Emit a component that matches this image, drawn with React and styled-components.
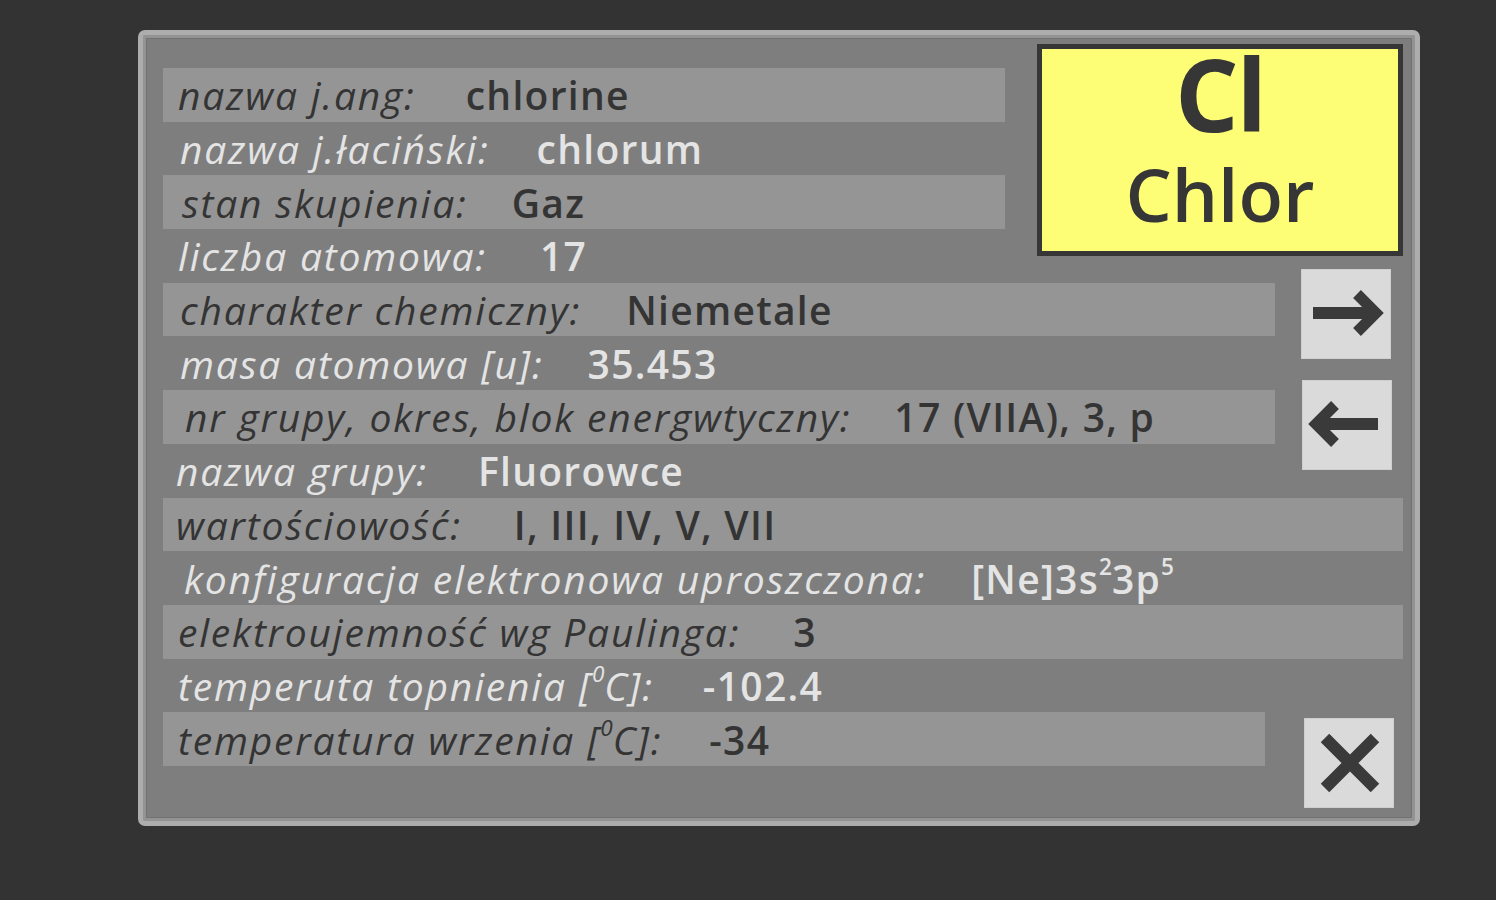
import React from "react";
import styled, { createGlobalStyle } from "styled-components";

const GlobalStyle = createGlobalStyle`
  html, body {
    margin: 0;
    padding: 0;
    background: #333333;
  }
  body {
    font-family: "Open Sans", "DejaVu Sans", sans-serif;
  }
`;

const rows = [
  { label: "nazwa j.ang:", value: "chlorine", striped: true, span: 1, gap: 50 },
  { label: "nazwa j.łaciński:", value: "chlorum", span: 1, indent: 2, gap: 47 },
  { label: "stan skupienia:", value: "Gaz", striped: true, span: 1, indent: 4, gap: 44 },
  { label: "liczba atomowa:", value: "17", span: 1, gap: 53 },
  { label: "charakter chemiczny:", value: "Niemetale", striped: true, span: 2, indent: 2 },
  { label: "masa atomowa [u]:", value: "35.453", span: 2, indent: 2, gap: 44 },
  {
    label: "nr grupy, okres, blok energwtyczny:",
    value: "17 (VIIA), 3, p",
    striped: true,
    span: 2,
    indent: 7,
    gap: 43,
  },
  { label: "nazwa grupy:", value: "Fluorowce", span: 2, indent: -2, gap: 50 },
  { label: "wartościowość:", value: "I, III, IV, V, VII", striped: true, span: 3, indent: -2, gap: 52 },
  {
    label: "konfiguracja elektronowa uproszczona:",
    value: (
      <>
        [Ne]3s<sup>2</sup>3p<sup>5</sup>
      </>
    ),
    span: 3,
    indent: 6,
  },
  { label: "elektroujemność wg Paulinga:", value: "3", striped: true, span: 3, gap: 53 },
  {
    label: (
      <>
        temperuta topnienia [<sup>0</sup>C]:
      </>
    ),
    value: "-102.4",
    span: 3,
    gap: 49,
  },
  {
    label: (
      <>
        temperatura wrzenia [<sup>0</sup>C]:
      </>
    ),
    value: "-34",
    striped: true,
    span: 2,
    trim: 10,
    gap: 47,
  },
];

const App = () => {
  return (
    <>
      <GlobalStyle />
      <Page>
        <Panel>
          {rows.map((row, i) => (
            <Row
              key={i}
              $striped={row.striped}
              $span={row.span}
              $indent={row.indent || 0}
              $gap={row.gap || 45}
              $trim={row.trim || 0}
            >
              <Label>{row.label}</Label>
              <Value>{row.value}</Value>
            </Row>
          ))}

          <ElementCard>
            <Symbol>Cl</Symbol>
            <ElementName>Chlor</ElementName>
          </ElementCard>

          <NavButton $row="5 / 7" $top={-14} $left={26} aria-label="next">
            <svg width="90" height="90" viewBox="0 0 90 90">
              <path d="M12 44 H68" stroke="#3a3a3a" strokeWidth="12" fill="none" />
              <path
                d="M56 25 L75 44 L56 63"
                stroke="#3a3a3a"
                strokeWidth="11"
                fill="none"
                strokeLinejoin="miter"
              />
            </svg>
          </NavButton>

          <NavButton $row="7 / 9" $top={-10} $left={27} aria-label="prev">
            <svg width="90" height="90" viewBox="0 0 90 90">
              <path d="M20 44 H76" stroke="#3a3a3a" strokeWidth="12" fill="none" />
              <path
                d="M33 25 L14 44 L33 63"
                stroke="#3a3a3a"
                strokeWidth="11"
                fill="none"
                strokeLinejoin="miter"
              />
            </svg>
          </NavButton>

          <NavButton $row="13 / 15" $top={6} $left={29} aria-label="close">
            <svg width="90" height="90" viewBox="0 0 90 90">
              <path
                d="M21 20 L71 70 M71 20 L21 70"
                stroke="#3a3a3a"
                strokeWidth="12"
                fill="none"
              />
            </svg>
          </NavButton>
        </Panel>
      </Page>
    </>
  );
};

const Page = styled.div`
  padding: 30px 0 0 138px;
`;

const Panel = styled.div`
  box-sizing: border-box;
  width: 1282px;
  height: 796px;
  padding: 33px 12px 0 20px;
  background: #7e7e7e;
  border: 5px solid #adadad;
  border-radius: 7px;
  box-shadow: inset 0 0 0 3px #939393, inset 0 0 0 4px #727272;
  display: grid;
  grid-template-columns: 842px 270px 128px;
  grid-template-rows: repeat(13, 53.7px) 1fr;
`;

const Row = styled.div`
  grid-column: 1 / ${(p) => p.$span + 1};
  margin-right: ${(p) => p.$trim}px;
  display: flex;
  align-items: center;
  gap: ${(p) => p.$gap}px;
  padding-left: ${(p) => 15 + p.$indent}px;
  background: ${(p) => (p.$striped ? "#959595" : "transparent")};
  color: ${(p) => (p.$striped ? "#343434" : "#e4e4e4")};
  font-size: 39px;
  white-space: nowrap;
  overflow: hidden;

  sup {
    font-size: 0.58em;
    line-height: 0;
    vertical-align: 0.85em;
    letter-spacing: 0;
  }
`;

const Label = styled.span`
  font-style: italic;
  font-weight: 400;
  letter-spacing: 1.8px;
`;

const Value = styled.span`
  font-weight: 600;
  letter-spacing: 1.3px;
`;

const ElementCard = styled.div`
  grid-column: 2 / 4;
  grid-row: 1 / 5;
  justify-self: end;
  align-self: start;
  margin-top: -24px;
  box-sizing: border-box;
  width: 366px;
  height: 212px;
  background: #fdfd76;
  border: 5px solid #363636;
  display: flex;
  flex-direction: column;
  align-items: center;
  color: #363636;
`;

const Symbol = styled.div`
  font-size: 100px;
  font-weight: 700;
  line-height: 1;
  margin-top: -6px;
  letter-spacing: -2px;
`;

const ElementName = styled.div`
  font-size: 73px;
  font-weight: 600;
  line-height: 1;
  margin-top: 14px;
`;

const NavButton = styled.button`
  grid-column: 3;
  grid-row: ${(p) => p.$row};
  justify-self: start;
  align-self: start;
  margin-top: ${(p) => p.$top}px;
  margin-left: ${(p) => p.$left}px;
  width: 90px;
  height: 90px;
  padding: 0;
  border: none;
  background: #dadada;
  box-shadow: inset 0 0 0 1px #cfcfcf;
  display: flex;
  align-items: center;
  justify-content: center;
  cursor: pointer;

  svg {
    display: block;
  }
`;

export default App;
